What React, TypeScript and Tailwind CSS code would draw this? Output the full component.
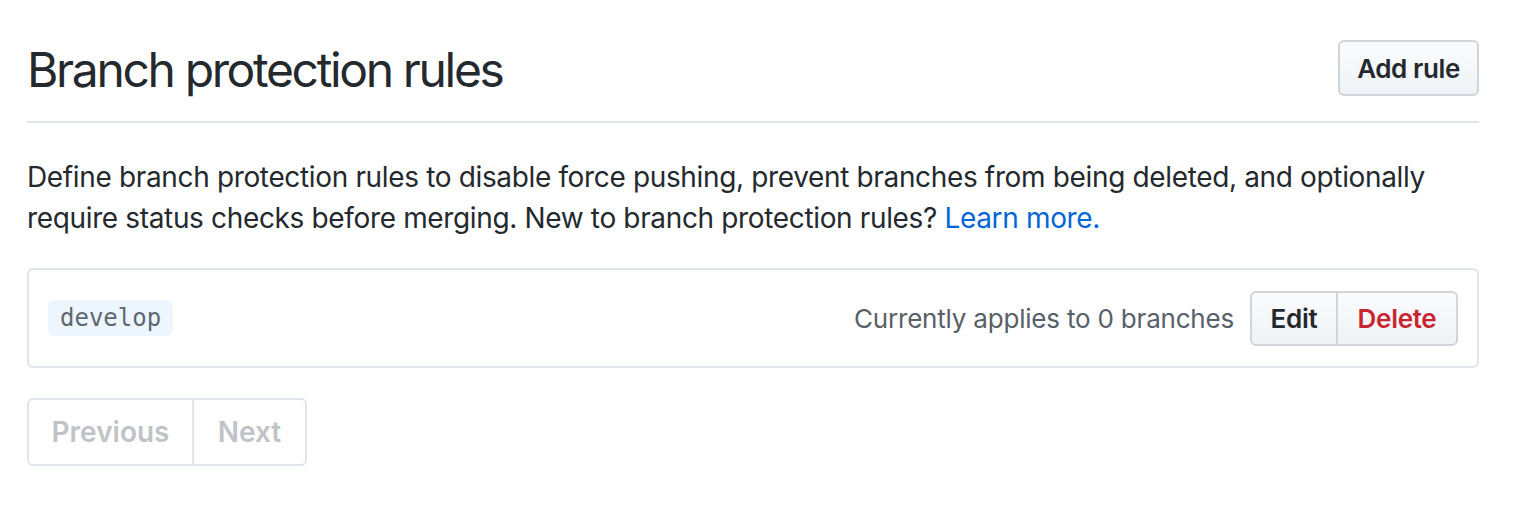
export default function App() {
  return (
    <div className="min-h-screen bg-white px-[27px] pt-[40px] text-[#24292e] [font-family:Inter,'Liberation_Sans',sans-serif]">
      <div className="w-[1452px]">
        <div className="flex items-center justify-between border-b-2 border-[#e1e4e8] pb-[25px]">
          <h2 className="mt-[4px] text-[48px] font-normal leading-[52px] tracking-[-2.35px]">
            Branch protection rules
          </h2>
          <button className="h-[56px] w-[141px] rounded-[6px] border-2 border-[#d1d5da] bg-gradient-to-b from-[#fafbfc] to-[#eff3f6] text-[26px] font-semibold tracking-[-0.4px] text-[#24292e]">
            Add rule
          </button>
        </div>

        <p className="mt-[34px] text-[28px] leading-[41px] tracking-[-0.35px]">
          Define branch protection rules to disable force pushing, prevent branches from being deleted, and optionally
          require status checks before merging. New to branch protection rules?{" "}
          <a className="text-[#0366d6]">Learn more.</a>
        </p>

        <div className="mt-[29px] flex h-[100px] items-center justify-between rounded-[6px] border-2 border-[#e1e4e8] px-[19px]">
          <code className="rounded-[6px] bg-[#edf5fe] px-[12px] py-[3px] text-[24px] leading-[30px] text-[#5f6770] [font-family:'DejaVu_Sans_Mono',monospace]">
            develop
          </code>
          <div className="flex items-center gap-[16px]">
            <span className="text-[26px] tracking-[-0.2px] text-[#586069]">Currently applies to 0 branches</span>
            <div className="flex h-[55px] overflow-hidden rounded-[6px] border-2 border-[#d1d5da] bg-gradient-to-b from-[#fafbfc] to-[#eff3f6] text-[26px] font-semibold tracking-[-0.3px]">
              <button className="w-[86px] border-r-2 border-[#d1d5da] text-[#24292e]">Edit</button>
              <button className="w-[118px] text-[#cb2431]">Delete</button>
            </div>
          </div>
        </div>

        <div className="mt-[30px] flex h-[68px] w-[280px] rounded-[6px] border-2 border-[#e1e4e8] text-[28px] font-semibold text-[#c0c3c7]">
          <span className="flex w-[165px] items-center justify-center border-r-2 border-[#e1e4e8]">Previous</span>
          <span className="flex flex-1 items-center justify-center">Next</span>
        </div>
      </div>
    </div>
  );
}
